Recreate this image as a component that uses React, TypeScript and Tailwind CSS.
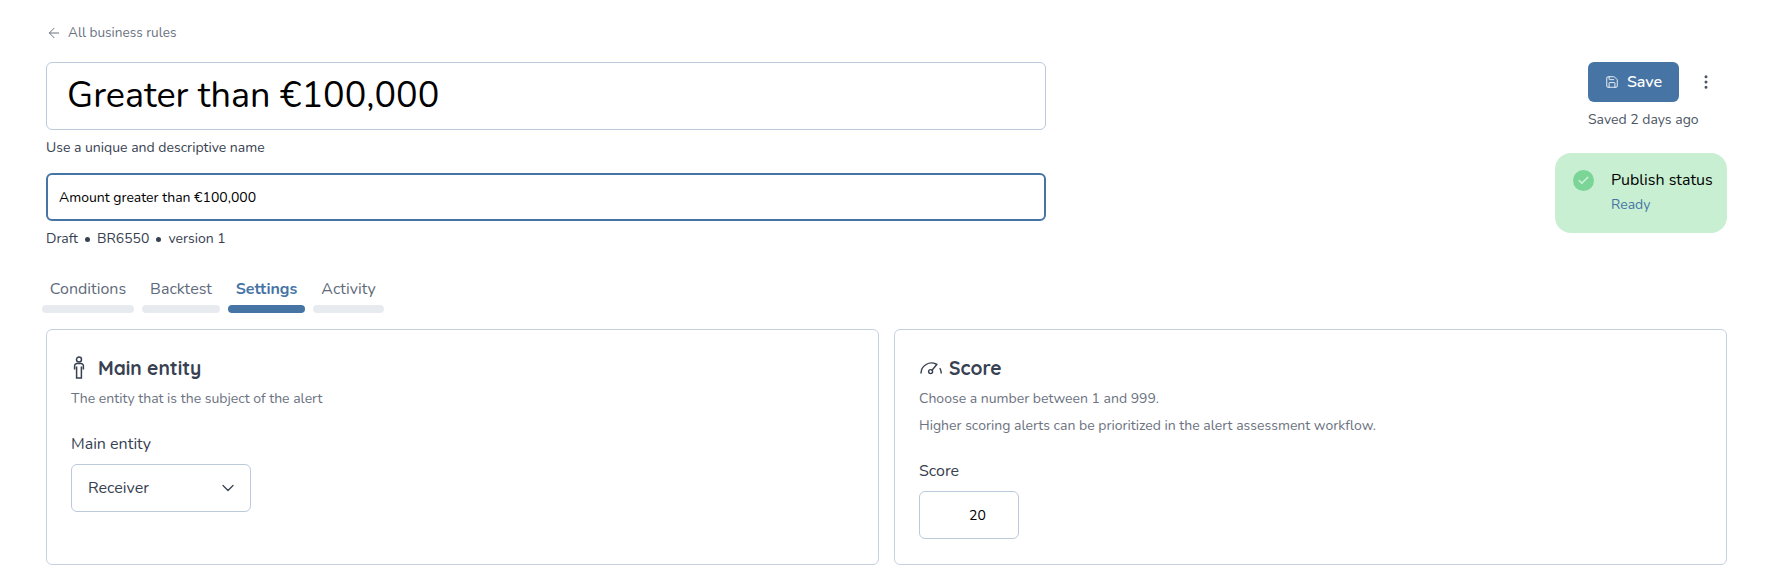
import React from 'react';
import { ArrowLeft, Save, MoreVertical, Check, ChevronDown } from 'lucide-react';

const tabs = [
  { label: 'Conditions', width: 'w-[92px]', active: false },
  { label: 'Backtest', width: 'w-[78px]', active: false },
  { label: 'Settings', width: 'w-[77px]', active: true },
  { label: 'Activity', width: 'w-[71px]', active: false },
];

const PersonIcon = () => (
  <svg width="14" height="24" viewBox="0 0 14 24" fill="none" stroke="#374151" strokeWidth="1.5">
    <circle cx="7" cy="3.6" r="2.5" />
    <path d="M2.6 13.5V10a2.4 2.4 0 0 1 2.4-2.4h4a2.4 2.4 0 0 1 2.4 2.4v3.5M4.6 10.5V22h4.8V10.5" />
  </svg>
);

const GaugeIcon = () => (
  <svg width="24" height="16" viewBox="0 0 24 16" fill="none" stroke="#374151" strokeWidth="1.4" strokeLinecap="round">
    <path d="M2 13a10.5 10.5 0 0 1 15-9" />
    <path d="M21 8.5a10 10 0 0 1 1.2 4.5" />
    <circle cx="11.6" cy="11.6" r="2" />
    <path d="M13 10.2l5-6" />
  </svg>
);

const App = () => {
  return (
    <div className="w-[1785px] h-[581px] overflow-hidden bg-white pl-[46px] pr-[58px] pt-[24px] font-['Nunito','Noto_Sans',sans-serif] text-[#374151]">
      {/* Back link */}
      <div className="flex items-center gap-[6px] h-[18px] text-[13.6px] leading-[18px] text-[#6b7280]">
        <ArrowLeft size={16} strokeWidth={1.5} />
        <span>All business rules</span>
      </div>

      {/* Header */}
      <div className="flex justify-between mt-[20px]">
        <div className="w-[1000px]">
          <div className="h-[68px] rounded-[6px] border border-[#bccadb] flex items-center pl-[20px] text-[36px] text-black">
            Greater than €100,000
          </div>
          <div className="mt-[10px] h-[16px] text-[14px] leading-[16px] text-[#374151]">Use a unique and descriptive name</div>
          <div className="mt-[17px] h-[48px] rounded-[6px] border-2 border-[#4674a5] flex items-center pl-[11px] text-[14px] text-black">
            Amount greater than €100,000
          </div>
          <div className="mt-[10px] h-[16px] flex items-center text-[14px] leading-[16px] text-[#374151]">
            <span>Draft</span>
            <span className="mx-[7px] w-[5px] h-[5px] rounded-full bg-[#374151]" />
            <span>BR6550</span>
            <span className="mx-[7px] w-[5px] h-[5px] rounded-full bg-[#374151]" />
            <span>version 1</span>
          </div>
        </div>

        <div className="w-[172px] flex flex-col">
          <div className="flex items-center pl-[33px]">
            <button className="w-[91px] h-[40px] rounded-[6px] bg-[#4674a5] text-white text-[16px] font-semibold flex items-center justify-center gap-[8px]">
              <Save size={14} strokeWidth={1.5} />
              Save
            </button>
            <MoreVertical size={18} strokeWidth={2} className="ml-[18px] text-[#4b5563]" />
          </div>
          <div className="pl-[33px] mt-[10px] h-[16px] text-[14px] leading-[16px] text-[#4b5563]">Saved 2 days ago</div>
          <div className="mt-[25px] h-[80px] rounded-[16px] bg-[#c8efd2] flex pl-[18px] pt-[17px]">
            <div className="w-[21px] h-[21px] rounded-full bg-[#7ad596] flex items-center justify-center text-[#d5f3df]">
              <Check size={13} strokeWidth={2.5} />
            </div>
            <div className="ml-[17px]">
              <div className="text-[16px] leading-[20px] text-black">Publish status</div>
              <div className="mt-[7px] text-[14px] leading-[16px] text-[#4674a5]">Ready</div>
            </div>
          </div>
        </div>
      </div>

      {/* Tabs */}
      <div className="flex gap-[8px] -ml-[4px] mt-[29px]">
        {tabs.map((tab) => (
          <div key={tab.label} className={tab.width}>
            <div className={`h-[26px] text-center text-[16px] leading-[26px] ${tab.active ? 'font-bold text-[#4674a5]' : 'text-[#5f6b7c]'}`}>
              {tab.label}
            </div>
            <div className={`mt-[3px] h-[8px] rounded-full ${tab.active ? 'bg-[#4674a5]' : 'bg-[#e7ebf0]'}`} />
          </div>
        ))}
      </div>

      {/* Cards */}
      <div className="grid grid-cols-2 gap-[15px] mt-[16px]">
        <div className="h-[236px] rounded-[6px] border border-[#c5d1de] pl-[24px] pt-[24px]">
          <div className="flex items-center gap-[12px] h-[28px] ml-[1px]">
            <PersonIcon />
            <span className="font-['Quicksand','Nunito','Noto_Sans',sans-serif] font-bold text-[19.2px] text-[#374151]">Main entity</span>
          </div>
          <div className="mt-[8px] text-[14px] leading-[18px] text-[#6b7280]">The entity that is the subject of the alert</div>
          <div className="mt-[26px] text-[16px] leading-[20px] text-[#374151]">Main entity</div>
          <div className="mt-[10px] w-[180px] h-[48px] rounded-[6px] border border-[#bccadb] flex items-center justify-between pl-[16px] pr-[12px] text-[16px] text-[#374151]">
            Receiver
            <ChevronDown size={20} strokeWidth={1.5} />
          </div>
        </div>

        <div className="h-[236px] rounded-[6px] border border-[#c5d1de] pl-[24px] pt-[24px]">
          <div className="flex items-center gap-[6px] h-[28px]">
            <GaugeIcon />
            <span className="font-['Quicksand','Nunito','Noto_Sans',sans-serif] font-bold text-[19.2px] text-[#374151]">Score</span>
          </div>
          <div className="mt-[8px] text-[14px] leading-[18px] text-[#6b7280]">Choose a number between 1 and 999.</div>
          <div className="mt-[9px] text-[14px] leading-[18px] text-[#6b7280]">Higher scoring alerts can be prioritized in the alert assessment workflow.</div>
          <div className="mt-[26px] text-[16px] leading-[20px] text-[#374151]">Score</div>
          <div className="mt-[10px] w-[100px] h-[48px] rounded-[6px] border border-[#bccadb] flex items-center pl-[49px] text-[14px] text-black">
            20
          </div>
        </div>
      </div>
    </div>
  );
};

export default App;
